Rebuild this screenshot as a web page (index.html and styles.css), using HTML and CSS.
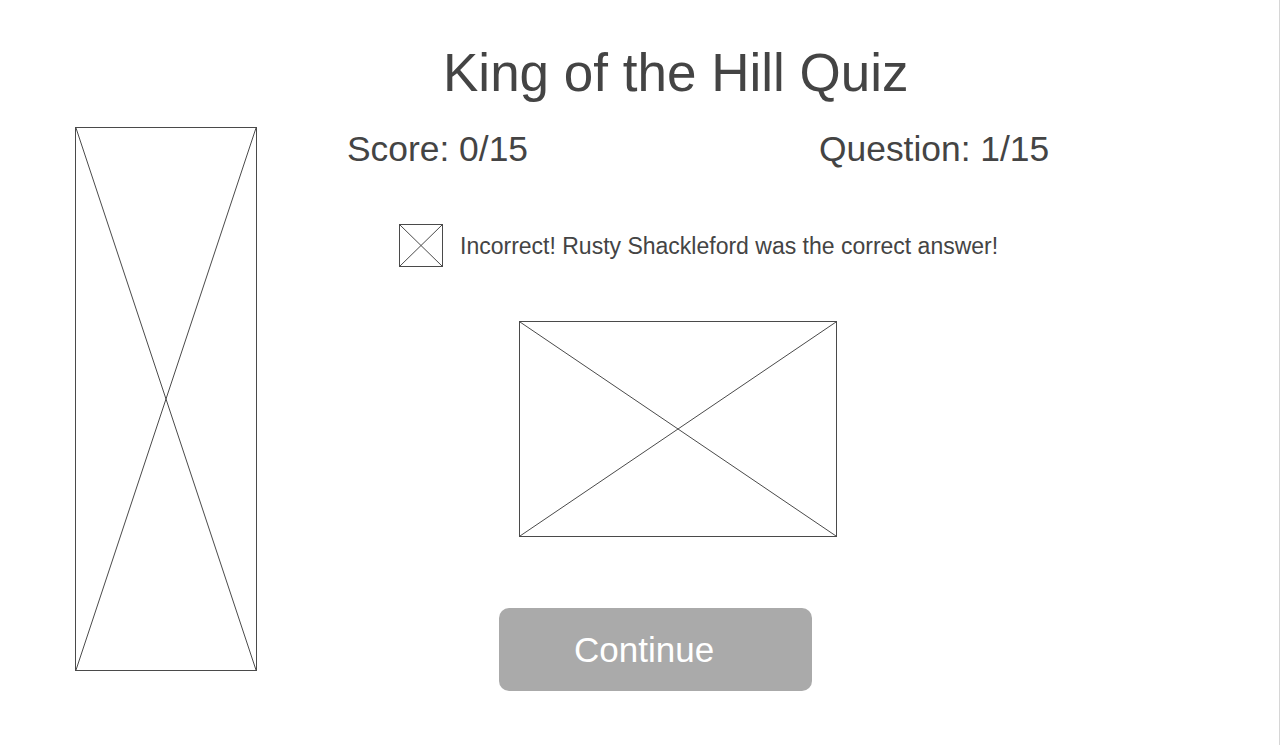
FILE: index.html
```html
<!DOCTYPE html>
<html lang="en">
<head>
<meta charset="utf-8">
<title>King of the Hill Quiz</title>
<link rel="stylesheet" href="styles.css">
</head>
<body>
<div class="page">
  <h1 class="title">King of the Hill Quiz</h1>
  <div class="layout">
    <div class="sidebar placeholder">
      <svg class="xmark" viewBox="0 0 100 100" preserveAspectRatio="none"><line x1="0" y1="0" x2="100" y2="100"/><line x1="100" y1="0" x2="0" y2="100"/></svg>
    </div>
    <main class="main">
      <div class="stats">
        <span class="score">Score: 0/15</span>
        <span class="question">Question: 1/15</span>
      </div>
      <div class="feedback">
        <div class="icon placeholder">
          <svg class="xmark" viewBox="0 0 100 100" preserveAspectRatio="none"><line x1="0" y1="0" x2="100" y2="100"/><line x1="100" y1="0" x2="0" y2="100"/></svg>
        </div>
        <span class="message">Incorrect! Rusty Shackleford was the correct answer!</span>
      </div>
      <div class="picture placeholder">
        <svg class="xmark" viewBox="0 0 100 100" preserveAspectRatio="none"><line x1="0" y1="0" x2="100" y2="100"/><line x1="100" y1="0" x2="0" y2="100"/></svg>
      </div>
      <button class="continue" type="button">Continue</button>
    </main>
  </div>
</div>
</body>
</html>
```
FILE: styles.css
```css
html, body {
  margin: 0;
  padding: 0;
  background: #ffffff;
}
body {
  font-family: "Liberation Sans", Arial, sans-serif;
  color: #444444;
}
.page {
  width: 1279px;
  height: 745px;
  border-right: 1px solid #d6d6d6;
  box-sizing: content-box;
  overflow: hidden;
}
.title {
  margin: 0;
  padding-top: 42px;
  padding-left: 443px;
  font-size: 53px;
  font-weight: normal;
  line-height: 61px;
  white-space: nowrap;
}
.layout {
  margin-top: 24px;
  display: flex;
  align-items: flex-start;
}
.placeholder {
  position: relative;
  border: 1px solid #4a4a4a;
  box-sizing: border-box;
  background: #ffffff;
}
.xmark {
  display: block;
  width: 100%;
  height: 100%;
}
.xmark line {
  stroke: #4a4a4a;
  stroke-width: 1;
  vector-effect: non-scaling-stroke;
}
.sidebar {
  margin-left: 75px;
  width: 182px;
  height: 544px;
  flex: none;
}
.main {
  flex: 1;
  display: flex;
  flex-direction: column;
  align-items: flex-start;
}
.stats {
  margin-top: 2px;
  margin-left: 90px;
  display: flex;
  gap: 291px;
  font-size: 35.4px;
  line-height: 40px;
  white-space: nowrap;
}
.feedback {
  margin-top: 55px;
  margin-left: 142px;
  display: flex;
  align-items: center;
  gap: 17px;
}
.icon {
  width: 44px;
  height: 43px;
  flex: none;
}
.message {
  font-size: 23px;
  line-height: 26px;
  white-space: nowrap;
}
.picture {
  margin-top: 54px;
  margin-left: 262px;
  width: 318px;
  height: 216px;
}
.continue {
  margin-top: 71px;
  margin-left: 242px;
  width: 313px;
  height: 83px;
  padding: 0 98px 0 75px;
  border: none;
  border-radius: 10px;
  background: #aaaaaa;
  color: #ffffff;
  font-family: "Liberation Sans", Arial, sans-serif;
  font-size: 35px;
  line-height: 40px;
  text-align: center;
  white-space: nowrap;
  cursor: pointer;
}
```
